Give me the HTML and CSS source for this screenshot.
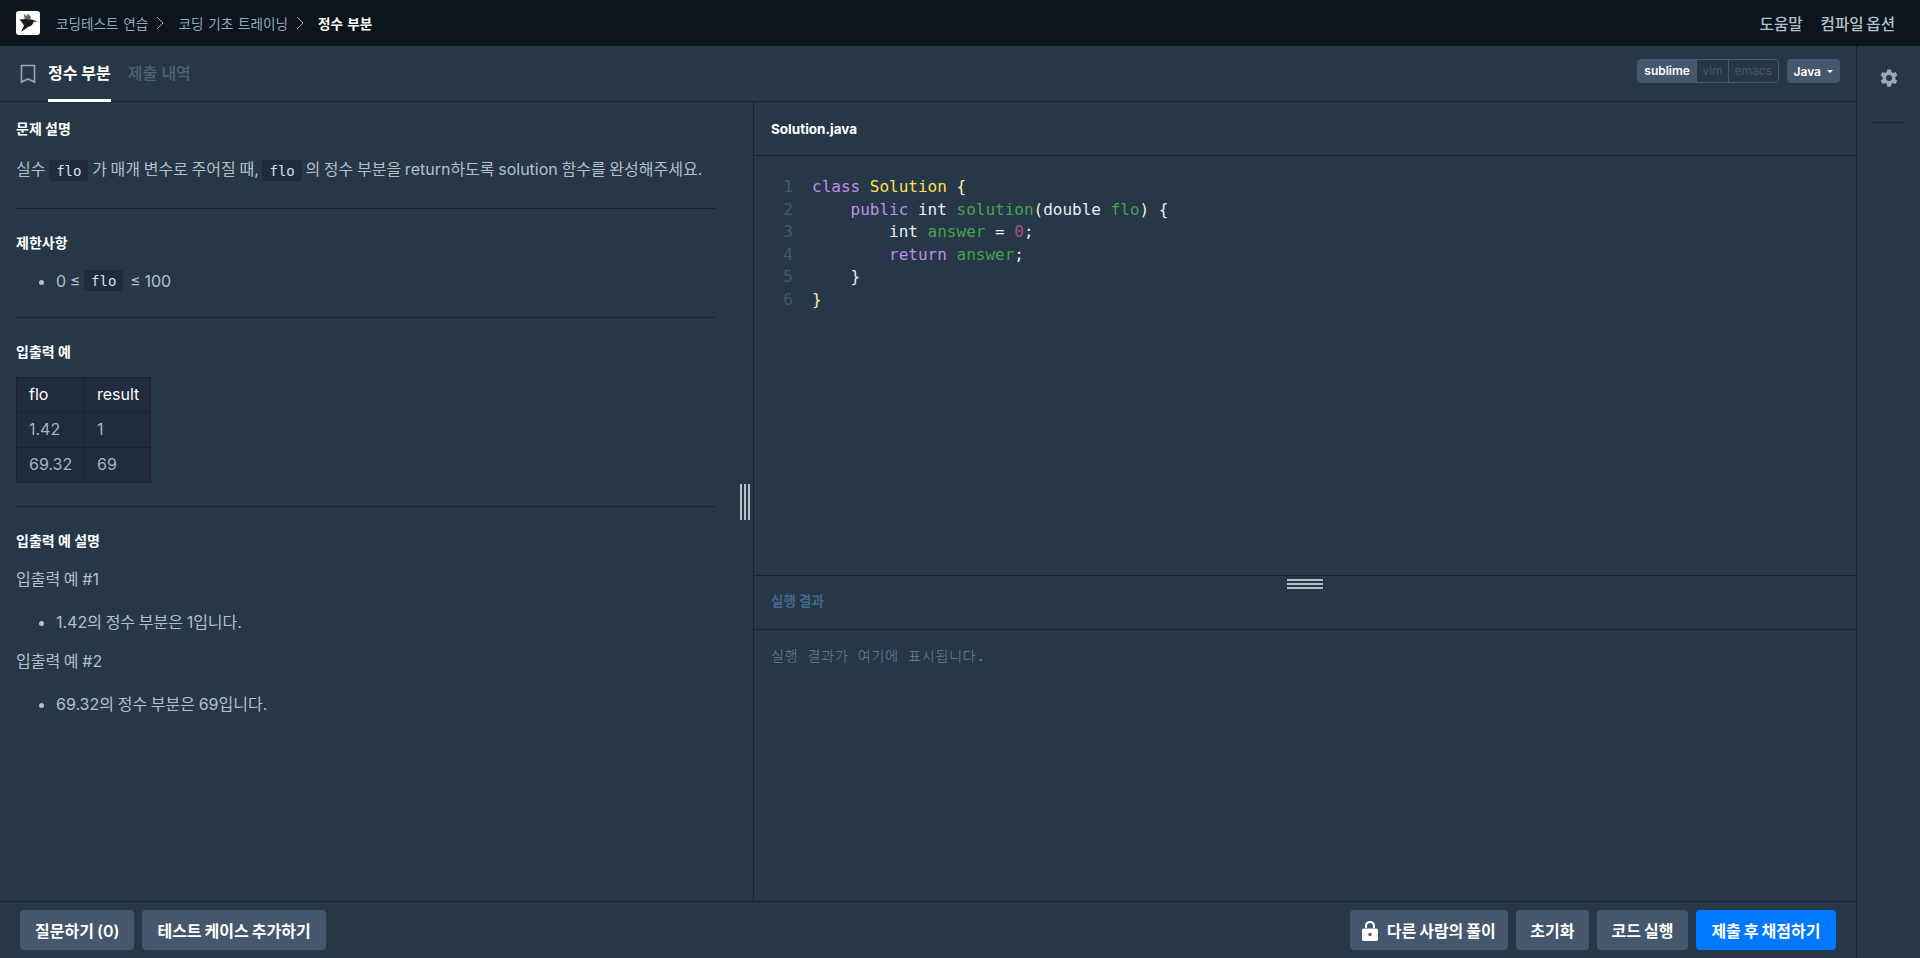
FILE: index.html
```html
<!DOCTYPE html>
<html lang="ko">

<head>
  <meta charset="UTF-8">
  <meta name="viewport" content="width=device-width, initial-scale=1.0">
  <title>정수 부분</title>
  <link rel="stylesheet" href="styles.css">
</head>

<body>
  <nav class="navbar">
    <div class="crumbs">
      <span class="logo">
        <svg width="24" height="24" viewBox="0 0 24 24">
          <path d="M8 3 L11.500 5.500 L11 2.500 L14.500 5 L15 10 L9 10 Z" fill="#59636e"/>
          <path d="M3.500 8.500 L9 8 L14 9 Q16 8 18 9.500 L22 10 L17.500 11 Q16.500 15 12 16 L5 21 L8 14.500 Q6 11 3.500 8.500 Z" fill="#16191d"/>
        </svg>
      </span>
      <a class="crumb">코딩테스트 연습</a>
      <svg class="chevron" width="8" height="14" viewBox="0 0 8 14"><path d="M1 1 L7 7 L1 13" fill="none" stroke="#8fa5b8" stroke-width="1"/></svg>
      <a class="crumb">코딩 기초 트레이닝</a>
      <svg class="chevron" width="8" height="14" viewBox="0 0 8 14"><path d="M1 1 L7 7 L1 13" fill="none" stroke="#8fa5b8" stroke-width="1"/></svg>
      <span class="crumb-current">정수 부분</span>
    </div>
    <div class="nav-links">
      <a>도움말</a>
      <a>컴파일 옵션</a>
    </div>
  </nav>

  <div class="workspace">
    <div class="main">
      <div class="tabbar">
        <div class="tabs">
          <svg class="bookmark" width="16" height="20" viewBox="0 0 16 20"><path d="M1.500 1.500 H14.500 V18 L8 15 L1.500 18 Z" fill="none" stroke="#98a8b9" stroke-width="1.600"/></svg>
          <span class="tab active">정수 부분</span>
          <span class="tab">제출 내역</span>
        </div>
        <div class="editor-opts">
          <div class="keymap">
            <span class="key on">sublime</span><span class="key">vim</span><span class="key">emacs</span>
          </div>
          <div class="lang">Java<i class="caret"></i></div>
        </div>
      </div>

      <div class="panes">
        <section class="problem">
          <h6>문제 설명</h6>
          <p>실수 <code>flo</code> 가 매개 변수로 주어질 때, <code>flo</code> 의 정수 부분을 return하도록 solution 함수를 완성해주세요.</p>
          <hr>
          <h6>제한사항</h6>
          <ul class="limits">
            <li>0 ≤ <code>flo</code> ≤ 100</li>
          </ul>
          <hr>
          <h6>입출력 예</h6>
          <table>
            <thead>
              <tr><th>flo</th><th>result</th></tr>
            </thead>
            <tbody>
              <tr><td>1.42</td><td>1</td></tr>
              <tr><td>69.32</td><td>69</td></tr>
            </tbody>
          </table>
          <hr>
          <h6>입출력 예 설명</h6>
          <p class="case">입출력 예 #1</p>
          <ul>
            <li>1.42의 정수 부분은 1입니다.</li>
          </ul>
          <p class="case">입출력 예 #2</p>
          <ul>
            <li>69.32의 정수 부분은 69입니다.</li>
          </ul>
          <div class="gutter-v"></div>
        </section>

        <section class="right">
          <div class="file-title">Solution.java</div>
          <div class="editor">
            <div class="line-nums">
              <div>1</div><div>2</div><div>3</div><div>4</div><div>5</div><div>6</div>
            </div>
            <pre class="code"><span class="kw">class</span> <span class="type">Solution</span> <span class="br1">{</span>
    <span class="kw">public</span> int <span class="var">solution</span>(double <span class="var">flo</span>) {
        int <span class="var">answer</span> = <span class="num">0</span>;
        <span class="kw">return</span> <span class="var">answer</span>;
    }
<span class="br1">}</span></pre>
          </div>
          <div class="result">
            <div class="gutter-h"></div>
            <div class="result-title">실행 결과</div>
            <div class="result-body">실행 결과가 여기에 표시됩니다.</div>
          </div>
        </section>
      </div>

      <footer class="actions">
        <div class="btn-group">
          <button class="btn">질문하기 (0)</button>
          <button class="btn">테스트 케이스 추가하기</button>
        </div>
        <div class="btn-group">
          <button class="btn btn-lock">
            <svg class="lock" width="16" height="21" viewBox="0 0 16 21"><path d="M3 9 V6 C3 2.800 5 1 8 1 C11 1 13 2.800 13 6 V9 H11 V6 C11 4 9.800 3 8 3 C6.200 3 5 4 5 6 V9 Z M1.500 8.500 H14.500 Q16 8.500 16 10 V19.500 Q16 21 14.500 21 H1.500 Q0 21 0 19.500 V10 Q0 8.500 1.500 8.500 Z M8 12.800 A1.700 1.700 0 1 0 8 16.200 A1.700 1.700 0 1 0 8 12.800 Z" fill="#fff" fill-rule="evenodd"/></svg>
            다른 사람의 풀이
          </button>
          <button class="btn">초기화</button>
          <button class="btn">코드 실행</button>
          <button class="btn primary">제출 후 채점하기</button>
        </div>
      </footer>
    </div>

    <aside class="side">
      <svg class="gear" width="18" height="18" viewBox="0 0 24 24"><path fill-rule="evenodd" fill="#98a8b9" d="M9.500 0.500 H14.500 L15 4 Q16.300 4.500 17.400 5.300 L20.700 4 L23.200 8.300 L20.400 10.500 Q20.600 12 20.400 13.500 L23.200 15.700 L20.700 20 L17.400 18.700 Q16.300 19.500 15 20 L14.500 23.500 H9.500 L9 20 Q7.700 19.500 6.600 18.700 L3.300 20 L0.800 15.700 L3.600 13.500 Q3.400 12 3.600 10.500 L0.800 8.300 L3.300 4 L6.600 5.300 Q7.700 4.500 9 4 Z M12 8 A4 4 0 1 0 12 16 A4 4 0 1 0 12 8 Z"/></svg>
      <div class="side-rule"></div>
    </aside>
  </div>
</body>

</html>
```

FILE: styles.css
```css
* {
  box-sizing: border-box;
}

html,
body {
  height: 100%;
}

body {
  margin: 0;
  overflow: hidden;
  display: flex;
  flex-direction: column;
  font-family: Inter, "Noto Sans CJK KR", sans-serif;
  font-size: 16px;
  color: #b2c0cc;
  background-color: #263747;
}

.navbar {
  height: 46px;
  flex: none;
  display: flex;
  align-items: center;
  justify-content: space-between;
  padding: 0 16px;
  background-color: #0c151c;
}

.crumbs {
  display: flex;
  align-items: center;
  font-size: 13.600px;
  word-spacing: 1px;
}

.logo {
  width: 24px;
  height: 24px;
  margin-right: 16px;
  background-color: #fff;
  border-radius: 3px;
}

.crumb {
  color: #98a8b9;
}

.chevron {
  margin: 0 14px 0 8px;
}

.crumb-current {
  color: #fff;
  font-weight: 700;
}

.nav-links {
  display: flex;
  gap: 18px;
  font-size: 15.600px;
  font-weight: 500;
  word-spacing: -1.500px;
  color: #b2c0cc;
  margin-right: 9px;
}

.workspace {
  flex: 1;
  min-height: 0;
  display: flex;
}

.main {
  flex: 1;
  min-width: 0;
  display: flex;
  flex-direction: column;
}

.tabbar {
  height: 56px;
  flex: none;
  display: flex;
  justify-content: space-between;
  padding: 0 16px 0 20px;
  border-bottom: 1px solid #172334;
}

.tabs {
  height: 56px;
  display: flex;
  align-items: center;
}

.bookmark {
  margin-right: 12px;
}

.tab {
  height: 56px;
  line-height: 54px;
  font-size: 16px;
  font-weight: 500;
  color: #4f6478;
}

.tab + .tab {
  margin-left: 17px;
}

.tab.active {
  color: #fff;
  font-weight: 700;
  border-bottom: 3px solid #fff;
}

.editor-opts {
  display: flex;
  align-items: flex-start;
  gap: 8px;
  padding-top: 13px;
}

.keymap {
  display: flex;
  height: 24px;
  font-size: 12px;
  border: 1px solid #44576c;
  border-radius: 4px;
}

.key {
  padding: 0 5.500px;
  line-height: 21px;
  color: #44576c;
  border-left: 1px solid #44576c;
}

.key:first-child {
  border-left: none;
}

.key.on {
  padding: 0 6px;
  color: #fff;
  font-weight: 600;
  background-color: #44576c;
}

.lang {
  height: 24px;
  display: flex;
  align-items: center;
  padding: 0 7px;
  font-size: 12px;
  font-weight: 600;
  color: #fff;
  background-color: #44576c;
  border-radius: 4px;
}

.caret {
  margin-left: 6px;
  border-top: 3px solid #fff;
  border-left: 3px solid transparent;
  border-right: 3px solid transparent;
}

.panes {
  flex: 1;
  min-height: 0;
  display: flex;
}

.problem {
  position: relative;
  width: 754px;
  flex: none;
  padding: 0 38px 0 16px;
  border-right: 1px solid #172334;
  word-spacing: -0.800px;
}

h6 {
  margin: 24px 0 0;
  font-size: 14px;
  line-height: 20px;
  font-weight: 700;
  color: #fff;
  word-spacing: 0;
}

h6:first-child {
  margin-top: 17px;
}

p {
  margin: 18px 0 0;
  line-height: 24px;
}

p.case {
  margin-top: 15px;
}

h6 + p.case {
  margin-top: 16px;
}

code {
  padding: 1.500px 6px;
  font-family: "DejaVu Sans Mono", monospace;
  font-size: 14px;
  line-height: 1;
  color: #d7e2eb;
  background-color: #202b3d;
  border: 1px solid #1e2a3c;
  border-radius: 4px;
}

.limits code {
  margin-right: 3px;
  vertical-align: 1.500px;
}

hr {
  margin: 24px 0 0;
  border: none;
  border-top: 1px solid #172334;
}

p + hr {
  margin-top: 27px;
}

table + hr {
  margin-top: 23px;
}

ul {
  margin: 19px 0 0;
  padding-left: 40px;
  line-height: 24px;
}

ul.limits {
  margin-top: 16px;
}

table {
  width: 135px;
  margin-top: 15px;
  border-collapse: collapse;
  table-layout: fixed;
  background-color: #202b3d;
  line-height: 24px;
}

th,
td {
  height: 35px;
  padding: 0 0 2px 12px;
  text-align: left;
  font-weight: 400;
  color: #a5b5c3;
  border: 1px solid #172334;
}

th {
  color: #fff;
}

th:first-child {
  width: 68px;
}

.gutter-v {
  position: absolute;
  top: 382px;
  right: 3px;
  width: 10px;
  height: 36px;
  background: repeating-linear-gradient(90deg, #b2c0cc 0 2px, #263747 2px 4px);
}

.right {
  flex: 1;
  min-width: 0;
  display: flex;
  flex-direction: column;
}

.file-title {
  height: 54px;
  flex: none;
  padding-left: 17px;
  line-height: 55px;
  font-size: 13.500px;
  font-weight: 700;
  color: #fff;
  border-bottom: 1px solid #172334;
}

.editor {
  height: 419px;
  flex: none;
  display: flex;
  padding-top: 20px;
  font-family: "DejaVu Sans Mono", monospace;
  font-size: 16px;
  line-height: 22.500px;
}

.line-nums {
  width: 39px;
  text-align: right;
  color: #44576c;
}

.code {
  margin: 0 0 0 19px;
  font: inherit;
  color: #e9eef3;
}

.kw {
  color: #c18ee6;
}

.type {
  color: #ffe14d;
}

.br1 {
  color: #ffeeb0;
}

.var {
  color: #45a349;
}

.num {
  color: #a5537f;
}

.result {
  position: relative;
  flex: 1;
  border-top: 1px solid #172334;
}

.gutter-h {
  position: absolute;
  top: 3px;
  left: 50%;
  width: 36px;
  height: 10px;
  margin-left: -18px;
  background: repeating-linear-gradient(180deg, #b2c0cc 0 2px, #263747 2px 4px);
}

.result-title {
  height: 54px;
  padding-left: 17px;
  line-height: 50px;
  font-size: 13.500px;
  font-weight: 700;
  color: #44698c;
  border-bottom: 1px solid #172334;
}

.result-body {
  padding: 15px 17px;
  font-family: "DejaVu Sans Mono", "Noto Sans CJK KR", monospace;
  font-size: 14px;
  font-weight: 300;
  letter-spacing: 0.800px;
  line-height: 22px;
  color: #66859a;
}

.actions {
  height: 57px;
  flex: none;
  display: flex;
  align-items: center;
  justify-content: space-between;
  padding: 0 20px;
  border-top: 1px solid #172334;
}

.btn-group {
  display: flex;
  gap: 8px;
}

.btn {
  height: 40px;
  display: flex;
  align-items: center;
  padding: 0 14.500px;
  font-family: inherit;
  font-size: 16px;
  font-weight: 600;
  word-spacing: -1px;
  color: #fff;
  background-color: #44576c;
  border: none;
  border-radius: 4px;
}

.btn-group:first-child .btn {
  padding: 0 15px;
}

.btn-lock {
  gap: 9px;
  padding: 0 12px;
}

.btn.primary {
  padding: 0 15.500px;
  background-color: #0078ff;
}

.side {
  width: 64px;
  flex: none;
  display: flex;
  flex-direction: column;
  align-items: center;
  padding-top: 23px;
  border-left: 1px solid #172334;
}

.side-rule {
  width: 32px;
  margin-top: 35px;
  border-top: 1px solid #172334;
}
```
